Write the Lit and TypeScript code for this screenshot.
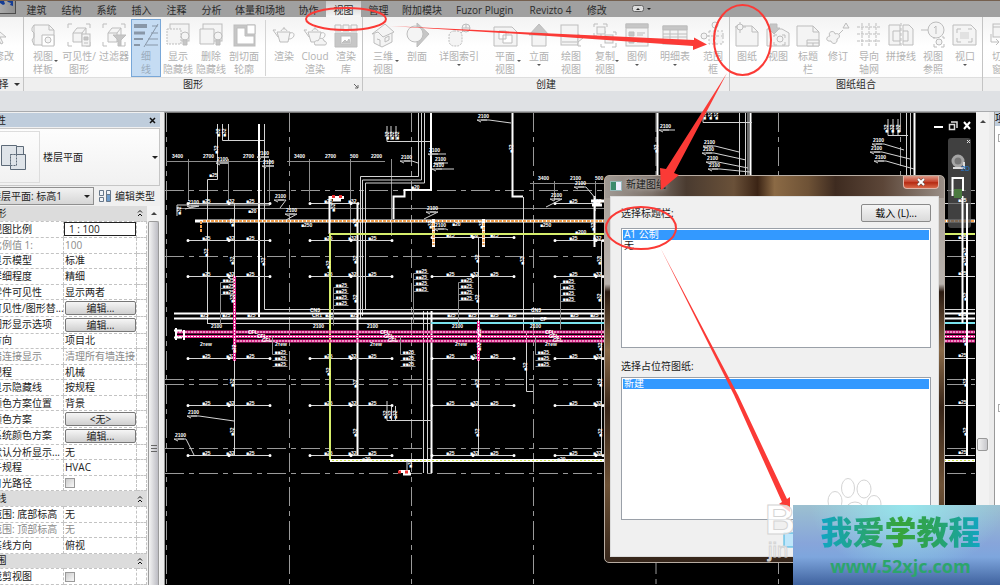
import { LitElement, html, svg, css, TemplateResult } from "lit";
import { customElement } from "lit/decorators.js";
import { classMap } from "lit/directives/class-map.js";

const FONT = css`"Open Sans", "Noto Sans CJK SC", sans-serif`;

/* ---------- ribbon glyphs, each on a 24 x 26 grid ---------- */
const corners = svg`<path d="M1 6V2h4M19 2h4v4M1 20v4h4M19 24h4v-4" fill="none"/>`;
const house = svg`<path d="M6 11l4-5h9v9l-4 5H6z"/><path d="M6 11h9v9M15 11l4-5" fill="none"/>`;
const sheet = svg`<path d="M1 4h16l6 6v14H1z"/><path d="M17 4v6h6" fill="none"/>`;
const bulb = svg`<circle cx="19" cy="14" r="4"/><path class="dk" d="M17 18h4v5h-4z"/>`;
const pot = svg`<path d="M5 10h13l-2 10H8zM9 9c1-3 5-3 6 0M11 6h2"/><path d="M6 15L1 8l3 0M18 11c6-2 5 6-1 6" fill="none"/>`;
const ICONS: Record<string, TemplateResult> = {
  cursor: svg`<path d="M2 5v15l4-4 3 6 2-1-3-6h6z"/>`,
  template: svg`<path d="M3 3h15l5 5v15H3z"/><path d="M3 3l-2 3v3l2 2v4l-2 3 2 5M18 3v5h5" fill="none"/><path class="wt" d="M11 13h12v11H11z"/><circle cx="17" cy="18" r="3"/>`,
  visibility: svg`${corners}${house}<rect x="15" y="12" width="8" height="12"/><path d="M17 15h4v3h-4zM17 21h4" class="dk"/>`,
  filter: svg`${corners}${house}<path d="M11 13h13l-5 5v6h-3v-6z" class="dk"/>`,
  thin: svg`<g stroke="#8897a8"><path d="M0 4h13" stroke-width="4"/><path d="M0 11h11" stroke-width="3"/><path d="M0 17h9M0 23h6" stroke-width="2"/><path d="M24 2L10 25M18 4h6M17 11h7M14 17h10M12 23h12"/></g>`,
  show: svg`<rect x="4" y="2" width="19" height="17"/><path d="M1 7h14v15H1z" stroke-dasharray="2 1"/>${bulb}`,
  remove: svg`<rect x="4" y="2" width="19" height="17"/><path d="M1 7h14v15H1z"/>${bulb}`,
  profile: svg`<rect x="2" y="3" width="21" height="21" class="dk"/><path d="M5 6h8v8h9v8H5z" class="wt"/><path d="M15 3h8v9h-8z" class="wt"/>`,
  render: pot,
  cloud: svg`${pot}<path d="M12 23c-2-4 2-5 3-4 1-4 6-3 6 0 3 0 3 4 1 4z"/>`,
  gallery: svg`<path d="M1 3h6v6H1zM9 3h6v6H9zM17 3h6v6h-6z"/><path d="M1 11h22v14H1z" class="dk"/><path d="M7 14h10v8H7z" class="wt"/><path d="M8 21l3-3 2 2 2-3 1 4z" class="dk"/>`,
  home: svg`<path d="M3 12v9l8 4 10-5v-9"/><path d="M1 12L14 2l9 8-11 5-5-5z"/><path d="M6 17l3 1v6M14 16l4-2v4l-4 2z" fill="none"/>`,
  section: svg`<path d="M12 1l12 11-12 13z" class="dk"/><circle cx="10" cy="12" r="8"/>`,
  callout: svg`<rect x="2" y="9" width="13" height="15" rx="5" stroke-dasharray="2 1"/><path d="M14 11l3-3" /><circle cx="19" cy="6" r="4"/><path d="M15 6h8M19 2v4"/>`,
  plan: svg`<path d="M1 5h18l5 5v14H1z"/><path d="M6 9h7v4h6v8h-9v-4H6z" class="wt"/><path d="M10 13h3v4h-3z"/>`,
  elevation: svg`<path d="M12 2L22 13H2z" class="dk"/><path d="M5 13h14v11H5z"/>`,
  drafting: svg`<rect x="2" y="3" width="17" height="20"/><path d="M3 20h15M19 12v8l5-4zM19 20v4h3" />`,
  duplicate: svg`<path d="M1 5V2h4M10 2h4v3M1 11v3h3M8 14v-3M8 22v3h4M19 25h4v-4M23 13v-3h-3M13 10h-2" fill="none"/><rect x="4" y="5" width="8" height="7"/><rect x="12" y="13" width="8" height="8"/>`,
  legend: svg`<rect x="1" y="2" width="22" height="22"/><path d="M1 2h22v4H1zM4 10h5v4H4zM4 17h5v4H4z" class="dk"/><path d="M12 11h8M12 13h6M12 18h8M12 20h6"/>`,
  schedule: svg`<rect x="0" y="4" width="24" height="18"/><path d="M0 4h24v4H0z" class="dk"/><path d="M0 12h24M0 15h24M0 19h24M7 8v14M15 8v14"/>`,
  scope: svg`<rect x="8" y="9" width="14" height="13" stroke-dasharray="2 2"/><path d="M5 14h19M14 5v19" stroke-dasharray="3 2"/><circle cx="3" cy="14" r="3"/><circle cx="14" cy="3" r="3"/>`,
  sheet: svg`${sheet}<path d="M5 0v11M0 5h11" /><circle cx="5" cy="5" r="3"/>`,
  place: svg`<path d="M1 7h15l7 4v13H1z"/><path d="M4 2h7v4h3l-6 6-6-6h2z" class="dk"/><path d="M8 15v-2h3M16 13h3v3M8 20v3h3M19 20v3h-3" fill="none"/><circle cx="14" cy="17" r="3"/>`,
  title: svg`${sheet}<path d="M11 18h12v6H11zM11 21h12M17 21v3"/>`,
  revision: svg`<path d="M20 1l3 5h-6zM17 8l-5 5" /><path d="M4 14c-3-5 5-6 5-2 5-2 6 4 2 5 1 5-5 6-6 2-6 1-5-5-1-5z"/>`,
  guide: svg`<path d="M5 1v24M12 1v24M19 1v24M0 5h24M0 12h24M0 19h24" stroke-dasharray="3 1"/>`,
  match: svg`<path d="M0 3h11v20H0zM14 3h6l4 4v16H14z"/><path d="M11 9H4v10h7M14 9h5v10h-5" fill="none"/><path d="M12 1v25" stroke-dasharray="3 2"/>`,
  ref: svg`<circle cx="15" cy="8" r="8"/><path d="M15 4v8M13 6l2-2M0 8h7" /><circle cx="18" cy="20" r="3"/><path d="M13 17v-2M23 17v-2h-2M13 22v3h3M23 22v3h-3" fill="none"/>`,
  viewport: svg`<path d="M0 3h18l5 5v15H0z"/><path d="M4 11V7h4M15 7h4M4 16v4h4M19 16v4h-4" fill="none"/><path d="M7 10h9v7H7z" class="dk2"/>`,
  windows: svg`<rect x="3" y="2" width="20" height="13"/><path d="M3 5h20M1 12v8h7M6 17l3 3-3 3" fill="none"/><rect x="12" y="11" width="12" height="12"/>`,
};

interface Tool { icon: string; lines: string[]; w: string; drop?: "side" | "below"; on?: boolean; rule?: boolean; }
interface Panel { name: string; tools: Tool[]; cls: string; launch?: boolean; menu?: boolean; }
const t = (icon: string, label: string, w: string, more: Partial<Tool> = {}): Tool => ({ icon, lines: label.split("|"), w, ...more });

const PANELS: Panel[] = [
  { name: "选择", cls: "first", menu: true, tools: [t("cursor", "修改", "w36")] },
  { name: "图形", cls: "", launch: true, tools: [
    t("template", "视图|样板", "w36", { drop: "side" }), t("visibility", "可见性/|图形", "w36"), t("filter", "过滤器", "w34"),
    t("thin", "细|线", "w30", { on: true }), t("show", "显示|隐藏线", "w34"), t("remove", "删除|隐藏线", "w32"),
    t("profile", "剖切面|轮廓", "w34"), t("render", "渲染", "w30", { rule: true }), t("cloud", "Cloud|渲染", "w32"), t("gallery", "渲染|库", "w30")] },
  { name: "创建", cls: "", tools: [
    t("home", "三维|视图", "w38", { drop: "side" }), t("section", "剖面", "w30"), t("callout", "详图索引", "w54", { drop: "below" }),
    t("plan", "平面|视图", "w38", { drop: "side" }), t("elevation", "立面", "w30", { drop: "below" }), t("drafting", "绘图|视图", "w34"),
    t("duplicate", "复制|视图", "w34", { drop: "side" }), t("legend", "图例", "w30", { drop: "below" }), t("schedule", "明细表", "w46", { drop: "below" }), t("scope", "范围|框", "w30")] },
  { name: "图纸组合", cls: "", tools: [
    t("sheet", "图纸", "w32"), t("place", "视图", "w30"), t("title", "标题|栏", "w30"), t("revision", "修订", "w30"),
    t("guide", "导向|轴网", "w32"), t("match", "拼接线", "w32"), t("ref", "视图|参照", "w32"), t("viewport", "视口", "w32", { drop: "below" })] },
  { name: "", cls: "last", tools: [t("windows", "切换|窗口", "w36")] },
];

@customElement("revit-ribbon")
class RevitRibbon extends LitElement {
  static styles = css`
    :host { display: block; font: 10px/14px ${FONT}; color: #2b2b2b; }
    button { font: inherit; color: inherit; border: 0; padding: 0; background: none; white-space: nowrap; }
    .tabs { display: flex; height: 17px; background: #a0a0a0; border-top: 1px solid #75604f; box-sizing: border-box; overflow: hidden; }
    .logo { width: 16px; height: 13px; flex: none; background: linear-gradient(90deg, #aaa, #8f8f8f); border: solid #4c4c4c; border-width: 0 1px 1px 0; box-sizing: border-box; margin-right: 3px; }
    .logo svg { display: block; }
    .tab { min-width: 35px; padding: 2px 6px 0; text-align: center; flex: none; line-height: 14px; }
    .tab.latin { padding: 2px 8px 0; }
    .tab.active { background: linear-gradient(#c9c9c9, #f6f6f6); }
    .cycle { margin-left: 18px; display: flex; align-items: center; }
    .body { display: flex; height: 74px; background: linear-gradient(#f3f3f3, #fff 40%, #fdfdfd); overflow: hidden; }
    .panel { display: flex; flex-direction: column; border-right: 1px solid #c4c4c4; box-sizing: border-box; flex: none; }
    .first { margin-left: -15px; }
    .last { flex: 1 0 36px; }
    .tools { display: flex; height: 60px; padding: 0 1px; }
    .tool { display: flex; flex-direction: column; align-items: center; box-sizing: border-box; position: relative; color: #b2b2b2; height: 58px; margin-top: 2px; padding-top: 2px; border: 1px solid transparent; flex: none; }
    .tool.on { background: #c5dcf3; border-color: #78a7d8; color: #9aabbc; }
    .rule { margin-left: 8px; }
    .rule::before { content: ""; position: absolute; left: -5px; top: 0; height: 56px; border-left: 1px solid #d4d4d4; }
    .tool svg.ic { width: 24px; height: 26px; flex: none; fill: #f4f4f4; stroke: #bdbdbd; stroke-width: 1; margin-bottom: 2px; overflow: visible; }
    .tool .dk { fill: #c6c6c6; } .tool .wt { fill: #fff; } .tool .dk2 { fill: #e2e2e2; stroke: none; }
    .tool span { display: block; line-height: 13px; }
    .caret { position: absolute; border: solid transparent; border-width: 2px 2px 0; border-top-color: #555; }
    .caret.side { right: 2px; top: 40px; } .caret.below { top: 44px; }
    .w30 { width: 30px; } .w32 { width: 32px; } .w34 { width: 34px; } .w36 { width: 36px; } .w38 { width: 38px; } .w46 { width: 46px; } .w54 { width: 54px; }
    .name { height: 14px; box-sizing: border-box; border-top: 1px solid #dedede; background: #efefef; text-align: center; line-height: 13px; position: relative; }
    .name i { display: inline-block; margin: 0 0 2px 5px; border: solid transparent; border-width: 3px 3px 0; border-top-color: #333; }
    .name svg { position: absolute; right: 3px; top: 5px; }
    .options { height: 20px; background: #dfe1e4; border-bottom: 1px solid #a9abae; }
  `;
  render() {
    const tabs = ["建筑", "结构", "系统", "插入", "注释", "分析", "体量和场地", "协作", "视图", "管理", "附加模块", "Fuzor Plugin", "Revizto 4", "修改"];
    return html`
      <nav class="tabs">
        <div class="logo"><svg width="15" height="12"><path d="M0 0h4l1 3-2 1-3-2zM7 0h6v5l-3-1 1-2-3-1z" fill="#143c94"/></svg></div>
        ${tabs.map((n) => html`<button class=${classMap({ tab: true, latin: /^[A-Z]/.test(n), active: n === "视图" })}>${n}</button>`)}
        <button class="cycle" aria-label="最小化功能区"><svg width="20" height="8"><rect x=".5" y=".5" width="11" height="6" rx="2" fill="#ddd" stroke="#666"/><path d="M4 5l2-2 2 2zM15 3h4l-2 2z" fill="#222"/></svg></button>
      </nav>
      <div class="body">
        ${PANELS.map((p) => html`<section class="panel ${p.cls}">
          <div class="tools">${p.tools.map((b) => html`<button class="tool ${b.w} ${b.on ? "on" : ""} ${b.rule ? "rule" : ""}">
            <svg class="ic" viewBox="0 0 24 26">${ICONS[b.icon]}</svg>
            ${b.lines.map((l) => html`<span>${l}</span>`)}
            ${b.drop ? html`<i class="caret ${b.drop}"></i>` : ""}</button>`)}</div>
          <div class="name">${p.name}${p.menu ? html`<i></i>` : ""}${p.launch ? html`<svg width="6" height="6"><path d="M1 1l4 4M5 2v3H2" stroke="#666" fill="none"/></svg>` : ""}</div>
        </section>`)}
      </div>
      <div class="options"></div>`;
  }
}

/* ---------- properties palette ---------- */
type Row = { label: string; value?: string; kind?: "head" | "edit" | "button" | "check" | "dim" };
const ROWS: Row[] = [
  { label: "图形", kind: "head" }, { label: "视图比例", value: "1 : 100", kind: "edit" }, { label: "比例值 1:", value: "100", kind: "dim" },
  { label: "显示模型", value: "标准" }, { label: "详细程度", value: "精细" }, { label: "零件可见性", value: "显示两者" },
  { label: "可见性/图形替...", value: "编辑...", kind: "button" }, { label: "图形显示选项", value: "编辑...", kind: "button" },
  { label: "方向", value: "项目北" }, { label: "墙连接显示", value: "清理所有墙连接", kind: "dim" }, { label: "规程", value: "机械" },
  { label: "显示隐藏线", value: "按规程" }, { label: "颜色方案位置", value: "背景" }, { label: "颜色方案", value: "<无>", kind: "button" },
  { label: "系统颜色方案", value: "编辑...", kind: "button" }, { label: "默认分析显示...", value: "无" }, { label: "子规程", value: "HVAC" },
  { label: "日光路径", kind: "check" }, { label: "基线", kind: "head" }, { label: "范围: 底部标高", value: "无" },
  { label: "范围: 顶部标高", value: "无", kind: "dim" }, { label: "基线方向", value: "俯视" }, { label: "范围", kind: "head" }, { label: "裁剪视图", kind: "check" },
];

@customElement("property-palette")
class PropertyPalette extends LitElement {
  static styles = css`
    :host { display: flex; flex-direction: column; overflow: hidden; min-height: 0; font: 10px/13px ${FONT}; color: #222; background: #f0f0f0; }
    .inner { margin-left: -20px; display: flex; flex-direction: column; flex: 1; min-height: 0; }
    button, select, input { font: inherit; color: inherit; }
    .title { display: flex; justify-content: space-between; align-items: center; background: #bfcddc; height: 14px; padding: 0 4px 0 6px; margin-top: 1px; }
    .title button { border: 0; background: none; padding: 0; display: flex; }
    .type { display: flex; align-items: center; height: 58px; border: 1px solid #c6c6c6; margin-top: 1px; padding-right: 1px; background: linear-gradient(#fdfdfd, #f1f1f1); box-sizing: border-box; }
    .thumb { width: 59px; height: 52px; border: 1px solid #ddd; box-sizing: border-box; display: flex; align-items: center; justify-content: flex-end; padding-right: 12px; }
    .type b { font-weight: 400; flex: 1; padding-left: 3px; }
    .down { border: solid transparent; border-width: 3px 3px 0; border-top-color: #222; }
    .inst { display: flex; align-items: center; height: 20px; }
    select { appearance: none; width: 114px; height: 18px; border: 1px solid #8f8f8f; border-radius: 0; background: linear-gradient(#f2f2f2, #d6d6d6); padding: 0 0 0 10px; margin-right: -10px; }
    .inst .down { margin-right: 8px; pointer-events: none; }
    .edit { display: flex; align-items: center; gap: 3px; border: 0; padding: 0; background: none; white-space: nowrap; }
    .grid { display: flex; flex: 1; min-height: 0; }
    table { width: 167px; height: 100%; border-collapse: collapse; table-layout: fixed; background: #fff; flex: none; }
    .c1 { width: 83px; } .c2 { width: 73px; }
    th, td { padding: 0; text-align: left; font-weight: 400; white-space: nowrap; overflow: hidden; border: 1px dashed #c3c3c3; line-height: 13px; }
    th { padding-left: 11px; } td { padding-left: 1px; }
    .head th { background: #dcdcdc; padding-left: 6px; border: 0; }
    .head td { background: #dcdcdc; border: 0; padding: 0; }
    .head svg { display: block; }
    .dim { color: #8b8b8b; }
    td input[type="text"] { display: block; width: 72px; height: 14px; box-sizing: border-box; border: 1px solid #222; padding: 0 4px; margin-left: -1px; background: #fff; }
    td button { display: block; width: 71px; height: 14px; border: 1px solid #777; border-radius: 2px; background: linear-gradient(#f6f6f6, #cfcfcf); padding: 0; line-height: 12px; text-align: center; }
    td input[type="checkbox"] { appearance: none; display: block; width: 10px; height: 10px; margin: 1px 0; border: 1px solid #999; background: linear-gradient(135deg, #ccc, #f8f8f8); }
    .bar { flex: 1; display: flex; flex-direction: column; align-items: center; background: #f3f3f3; padding: 0 1px; }
    .up { border: solid transparent; border-width: 0 3px 3px; border-bottom-color: #444; margin: 6px 0; }
    .knob { flex: 1; align-self: stretch; border: 1px solid #9b9b9b; border-bottom: 0; border-radius: 2px 2px 0 0; background: linear-gradient(90deg, #f4f4f4, #d2d2d6 60%, #bdbdc4); display: flex; align-items: center; justify-content: center; padding-top: 90px; }
  `;
  row(r: Row, i: number) {
    const id = "prop" + i;
    if (r.kind === "head") return html`<tr class="head"><th colspan="2">${r.label}</th><td><svg width="8" height="8"><path d="M1 3.500l2-2 2 2M1 7l2-2 2 2" fill="none" stroke="#111"/></svg></td></tr>`;
    const cell = r.kind === "edit" ? html`<input id=${id} type="text" .value=${r.value ?? ""}>`
      : r.kind === "button" ? html`<button id=${id}>${r.value}</button>`
      : r.kind === "check" ? html`<input id=${id} type="checkbox">` : r.value;
    return html`<tr class=${r.kind === "dim" ? "dim" : ""}><th><label for=${id}>${r.label}</label></th><td>${cell}</td><td></td></tr>`;
  }
  render() {
    return html`<div class="inner">
      <div class="title"><span>属性</span><button aria-label="关闭"><svg width="7" height="7"><path d="M1 1l5 5M6 1L1 6" stroke="#111" stroke-width="1.500"/></svg></button></div>
      <div class="type"><div class="thumb"><svg width="28" height="28"><g fill="#dfe4e9" stroke="#5d6a78"><path d="M2.500 2.500h15v20h-15z"/><path d="M17.500 3.500h7v8h-7z"/><path d="M11.500 11.500h15v15h-15z"/><path d="M11.500 11.500h6v11h-6z" stroke-dasharray="2 1"/></g></svg></div><b>楼层平面</b><i class="down"></i></div>
      <div class="inst"><select aria-label="实例"><option>楼层平面: 标高1</option></select><i class="down"></i>
        <button class="edit"><svg width="14" height="14"><g fill="#eef3f8" stroke="#66778a"><path d="M1.500 1.500h4v5h-4zM8.500 1.500h4v5h-4zM1.500 8.500h4v4h-4z"/><path d="M8.500 5.500h4v7h-4z" fill="#6d9ccc"/></g></svg>编辑类型</button></div>
      <div class="grid">
        <table><colgroup><col class="c1"><col class="c2"><col></colgroup><tbody>${ROWS.map((r, i) => this.row(r, i))}</tbody></table>
        <div class="bar"><i class="up"></i><div class="knob"><svg width="6" height="7"><path d="M0 .5h6M0 3.500h6M0 6.500h6" stroke="#666"/></svg></div></div>
      </div></div>`;
  }
}

/* ---------- floor plan ---------- */
const ln = (d: string, c = "w") => svg`<path class=${c} d=${d}/>`;
const tag = (x: number, y: number, s = "■25") => svg`<text x=${x} y=${y}>${s}</text>`;
const vtag = (x: number, y: number, s = "■32") => svg`<text transform="translate(${x} ${y}) rotate(-90)">${s}</text>`;
const branch = (x: number, y: number, w = 82) => svg`
  <path class="w" d="M${x} ${y}h${w}"/><path class="dot" d="M${x} ${y}h0M${x + 41} ${y}h0M${x + w} ${y}h0"/>
  ${tag(x + 14, y - 1)}${tag(x + 38, y - 1, "■32")}${w > 60 ? tag(x + 58, y - 1) : ""}`;
const ladder = (x: number, y: number, n: number, tail: number) => svg`
  <path class="g" d="M${x} ${y}v${tail}"/>
  ${Array.from({ length: n }, (_, i) => svg`<path class="g" d="M${x} ${y + i * 6}h15"/>${tag(x + 2, y + i * 6 - 1, "■■25")}`)}`;
const leader = (x: number, y: number, dx: number, dy: number) => svg`<path class="w" d="M${x + 10} ${y}h-10l4 2M${x + 4} ${y}h8L${x + dx} ${y + dy}"/>${tag(x + 1, y - 2, "2100")}`;

@customElement("plan-view")
class PlanView extends LitElement {
  static styles = css`
    :host { display: block; overflow: hidden; background: #000; }
    svg { display: block; width: 100%; height: 100%; }
    path { fill: none; stroke: #dcdcdc; }
    text { font: bold 5px "Liberation Sans", sans-serif; fill: #fff; }
    .w { stroke: #d4d4d4; } .g { stroke: #8e8e8e; } .b { stroke: #fff; stroke-width: 2; }
    .dash { stroke: #9a9a9a; stroke-dasharray: 19 5 5 5; }
    .dot { stroke: #fff; stroke-width: 3; stroke-linecap: round; }
    .y { stroke: #d6ee6c; stroke-width: 2; } .yd { stroke: #c9e04a; stroke-dasharray: 2 2; }
    .ob { stroke: #fff; stroke-width: 3; } .o { stroke: #f2a04c; stroke-width: 2; stroke-dasharray: 3 1; }
    .pk { stroke: #e0218a; stroke-width: 3; } .pw { stroke: #fff; stroke-dasharray: 2 1; }
    .cy { stroke: #79e3ee; stroke-width: 2; } .red { stroke: #e33; stroke-width: 3; stroke-dasharray: 3 4; }
    .bar { fill: #555; fill-opacity: .75; }
    .blue { fill: #2d6aa8; font-size: 7px; }
  `;
  render() {
    const xs = [188, 310, 432, 555];
    return html`<svg role="img" aria-label="楼层平面图"><g transform="translate(-165 -112)">
      ${[166.5, 289.5, 411.5, 533.5, 656, 778.5, 900.5].map((x) => ln(`M${x} 112V600`, "dash"))}
      ${[189.5, 255.5, 378.5, 383.5, 447.5, 472.500].map((y) => ln(`M165 ${y}H975`, "dash"))}
      ${ln("M166 160.500H273M287 160.500H385M530 182.500H605M177 207.500H605M188.500 158V200M228.500 158V200M269.500 158V200M309.500 158V200M350.500 158V237M391.500 158V235M554.500 180V200M595.500 180V210", "g")}
      ${[[172, "3400"], [203, "2700"], [243, "2700"], [294, "3400"], [325, "2700"], [350, "500"], [371, "2200"]].map(([x, s]) => tag(x as number, 157, s as string))}
      ${tag(538, 179, "3400")}${tag(570, 179, "2100")}${tag(595, 179, "500")}
      ${ln("M217.500 123V178.500H207.500V322M222.500 123V139.500H264M228.500 123V139M387 125V140.500H432M391 125V139M396 125V139M264.500 123V308.500H605M207 322.500H430M177 215V204H270")}
      ${ln("M259 123V316", "b")}${ln("M234.500 202V454M478.500 237V454M523.500 196V330M526.500 330V390.500H533M423.500 310V472M427.500 310V472M601.500 240V454")}
      ${ln("M357.500 202V454M393.500 218V195.500H404.500V189H431V112M431.500 310V472M512.500 112V195.500H523", "b")}
      ${ln("M360.500 318V175.500H418.500V112M362.500 315V179H421.500V112M365.500 308V182H424.500V112", "w")}
      ${xs.map((x, i) => [275.5, 357.5, 404.5, 454.5].map((y) => branch(x, y, i === 3 ? 48 : 82)))}
      ${branch(188, 239.5)}${branch(310, 239.5)}${branch(432, 236.5)}${branch(555, 239.5, 48)}${branch(188, 202.5)}${branch(310, 202.5, 48)}${branch(555, 202.5, 44)}
      ${ln("M195 220H975", "ob")}${ln("M203 220H975", "o")}${ln("M201 220V231", "o")}
      ${[433.5, 483.5].map((x) => [ln(`M${x} 218V246`, "ob"), ln(`M${x} 222V244`, "o")])}${ln("M594.500 195V246", "b")}
      ${ln("M329.500 195V233", "b")}${ln("M975 233H330V459", "y")}${ln("M330 459.500H975", "ob")}${ln("M332 459.500H975", "yd")}
      ${ln("M174 312.500H975M174 317.500H975", "b")}${ln("M431 322H975", "cy")}
      ${[331, 335.5, 340].map((y, i) => [ln(`M${i === 2 ? 234 : 176} ${y}H975`, "pk"), ln(`M${i === 2 ? 234 : 176} ${y}H975`, "pw")])}
      ${ln("M174 329.500h8M174 336.500h8M176 327v12M184 329v10", "b")}
      ${ln("M234.500 275V360M478.500 320V360", "pk")}${ln("M234.500 275V360M478.500 320V360", "pw")}
      ${[200, 222, 247, 325, 350, 447, 468, 490, 508, 570, 590].map((x) => tag(x, 316))}
      ${[248, 257, 262, 380, 384, 388, 545, 549, 553].map((x, i) => tag(x, 333 + (i % 3) * 4, "CFL"))}
      ${[200, 275, 370, 455, 545].map((x) => tag(x, 345, "2ᴛew"))}${[211, 313, 367, 452, 530].map((x) => tag(x, 327, "2100"))}
      ${tag(310, 311, "CN3")}${tag(312, 316, "CR1")}${tag(531, 311, "CN3")}${tag(540, 320, "CF")}
      ${[[219, 136], [225, 136], [217, 153], [207, 256], [264, 265], [233, 226], [233, 264], [233, 302], [329, 268], [334, 211], [356, 226], [356, 263], [356, 302], [388, 139], [393, 139], [398, 139], [512, 152], [523, 264], [478, 262], [478, 302], [431, 228], [482, 228], [594, 230], [600, 264], [600, 301], [235, 352], [233, 386], [233, 435], [329, 375], [356, 387], [356, 436], [478, 387], [478, 436], [526, 370], [480, 350], [480, 336], [601, 350], [601, 386], [601, 436], [180, 214], [386, 418], [391, 418], [396, 418], [411, 467]].map(([x, y]) => vtag(x + 1, y))}
      ${tag(209, 176, "■25")}${tag(248, 212, "■20")}${tag(301, 226, "■250")}${tag(362, 460, "■20")}${tag(557, 460, "■20")}${tag(452, 225, "■20")}${tag(540, 226, "■250")}${tag(575, 233, "■200")}${tag(411, 188, "■20")}
      ${ladder(220.5, 281.5, 3, 42)}${ladder(333.5, 286.5, 4, 38)}${ladder(413.5, 272.500, 4, 50)}${ladder(458.5, 281.5, 4, 42)}${ladder(560.5, 282.5, 4, 46)}
      ${ladder(272.5, 353.5, 3, -18)}${ladder(400.5, 353.5, 3, -18)}${ladder(535.5, 353.5, 3, -18)}
      ${leader(187, 205, -2, 3)}${leader(274, 199, 6, 8)}${leader(285, 213, 1, 6)}${leader(187, 415, 47, 5)}${leader(174, 438, 20, 16)}${leader(477, 119, 34, 3)}
      ${leader(428, 153, 18, 0)}${leader(434, 162, 14, 0)}${leader(432, 168, 22, 0)}${leader(400, 160, 18, 2)}${leader(426, 211, -2, 7)}${leader(434, 228, 14, 1)}${leader(574, 186, 22, 12)}${leader(550, 198, -4, 8)}${leader(216, 162, 10, 0)}${leader(257, 156, 10, 0)}${leader(262, 165, 10, 0)}
      ${ln("M387 400V419.500H432M391.500 405V419M395.500 405V419M407 460V472", "w")}
      ${ln("M330 196.500h14M333 199h8M399 470.500h11M403 473h8M591 200h14M592 204h10", "ob")}${ln("M332 195.500h12M398 471h12", "red")}
      ${ln("M657.500 112V180M750.500 112V180M914.500 112V180", "b")}${ln("M739.500 112V180M745.500 112V180M748 112V180M906.500 112V180M910.500 112V180M703 112V121.500H752M888 118V134.500H908M893 118V134M898 118V134")}
      ${leader(659, 129, 16, 0)}${leader(703, 145, 36, 6)}${leader(702, 152, 44, 7)}${leader(706, 161, 42, 6)}${leader(708, 168, 42, 3)}
      ${leader(872, 143, 32, 6)}${leader(870, 151, 40, 7)}${leader(874, 160, 40, 8)}${[706, 712, 718, 888, 894, 900].map((x, i) => vtag(x, i > 2 ? 132 : 119))}${vtag(658, 152)}
      ${ln("M945 202.500H975M945 239.500H975M945 275.500H975M945 308.500H975M945 357.500H975M945 404.500H975M945 454.500H975")}
      <rect class="bar" x="948" y="137" width="23" height="90" rx="3"/>
      ${ln("M952.500 195V177H963V190M962.500 195V322M967 202V455", "b")}
      ${[202, 239, 275, 316, 357, 404, 454].map((y) => tag(958, y - 1))}${[255, 265, 300, 345, 386, 435].map((y) => vtag(967, y))}
      <rect x="954" y="188" width="8" height="9" fill="#4b7a3f"/>
      <path d="M967 139l3 3M970 139l-3 3"/><circle cx="958" cy="160" r="5" fill="#777" stroke="#a5a5a5" stroke-width="3"/><path d="M953 167h11v-6" stroke="#a5a5a5" stroke-width="2"/><text class="blue" x="961" y="170">2D</text>
      <path class="b" d="M934 126h9M964 121l6 7M970 121l-6 7"/><path d="M949.500 123.500h5v5h-5zM951 121h6v6" stroke="#fff" stroke-width="1.500"/>
    </g></svg>`;
  }
}

/* ---------- new sheet dialog ---------- */
@customElement("sheet-dialog")
class SheetDialog extends LitElement {
  static styles = css`
    :host { display: flex; flex-direction: column; box-sizing: border-box; padding: 0 5px 5px; border: 1px solid #b7aca2; border-radius: 5px; font: 10px/13px ${FONT}; color: #1c1c1c;
      background: linear-gradient(90deg, #a19a94, #7d726a 14%, #4a3b30 24%, #6a5139 38%, #3b2415 45%, #8b6a45 50%, #6e5236 60%, #3e2b20 68%, #5c4638 82%, #998e86) 0 0 / 100% 22px no-repeat, linear-gradient(#a69d95, #b9b3ae 28%, #2a1a10 30%, #8a6a48 45%, #372417 60%, #6e5236 80%, #35251a); }
    .bar { display: flex; align-items: center; height: 20px; flex: none; gap: 4px; }
    .bar h2 { margin: 0; font: inherit; text-shadow: 0 0 5px #ddd; flex: 1; line-height: 16px; padding-bottom: 4px; }
    .close { align-self: flex-start; width: 36px; height: 13px; border: 1px solid #e0b5a8; border-top: 0; border-radius: 0 0 4px 4px; background: linear-gradient(#dc9a88, #c6402a 50%, #b52a12 55%, #d8694a); padding: 0; display: flex; align-items: center; justify-content: center; box-sizing: border-box; }
    .body { flex: 1; min-height: 0; background: #f0f0f0; border: 1px solid #ddd; padding: 7px 7px 10px 10px; display: flex; flex-direction: column; box-sizing: border-box; }
    .line { display: flex; justify-content: space-between; align-items: center; height: 18px; margin-bottom: 6px; }
    .load { width: 70px; height: 18px; border: 1px solid #8a8a8a; border-radius: 2px; background: linear-gradient(#f5f5f5, #dadada); font: inherit; padding: 0; }
    select { appearance: none; display: block; width: 100%; border: 1px solid #9aa0a8; border-radius: 0; background: #fff; padding: 0 1px; font: inherit; color: inherit; overflow: hidden; outline: 0; box-sizing: border-box; }
    option { padding: 0 1px; height: 14px; min-height: 14px; margin: -3px 0 -1px; font-size: 10px; }
    option.hot { background: linear-gradient(#39f, #39f) 0 4px / 100% 10px no-repeat; color: #fff; }
    .a { height: 120px; } .b { height: 143px; }
    .mid { height: 16px; line-height: 16px; margin: 10px 0 3px; }
  `;
  render() {
    return html`<div class="bar"><svg width="12" height="10"><rect x=".5" y=".5" width="11" height="9" fill="#eef" stroke="#9bb"/><path d="M1 1h5v8H1z" fill="#3b8a6e"/></svg><h2>新建图纸</h2>
        <button class="close" aria-label="关闭"><svg width="10" height="8"><path d="M2 1l6 6M8 1L2 7" stroke="#555" stroke-width="3"/><path d="M2 1l6 6M8 1L2 7" stroke="#fff" stroke-width="2"/></svg></button></div>
      <div class="body">
        <div class="line"><label for="titles">选择标题栏:</label><button class="load">载入 (L)...</button></div>
        <select id="titles" class="a" size="8"><option class="hot">A1 公制</option><option>无</option></select>
        <label class="mid" for="holders">选择占位符图纸:</label>
        <select id="holders" class="b" size="8"><option class="hot">新建</option></select>
      </div>`;
  }
}

@customElement("app-root")
class AppRoot extends LitElement {
  static styles = css`
    :host { display: flex; flex-direction: column; height: 100vh; position: relative; overflow: hidden; background: #ececec; font: 10px/13px ${FONT}; }
    .main { flex: 1; min-height: 0; display: grid; grid-template-columns: 160px minmax(0, 1fr) 13px 6px; grid-template-rows: minmax(0, 1fr); column-gap: 5px; }
    .stage { position: relative; display: grid; margin-right: -5px; border-top: 1px solid #777; box-shadow: -1px 0 #999; }
    sheet-dialog { position: absolute; left: 439px; top: 62px; width: 341px; height: 388px; }
    .vbar { background: #f2f2f2; display: flex; flex-direction: column; align-items: center; }
    .up { border: solid transparent; border-width: 0 3px 3px; border-bottom-color: #444; margin: 8px 0 315px; }
    .knob { width: 11px; height: 13px; box-sizing: border-box; border: 1px solid #999; border-radius: 2px; background: linear-gradient(90deg, #f2f2f2, #c8c8cc); }
    .tree { background: #fff; border-left: 1px solid #999; overflow: hidden; white-space: nowrap; }
    .tree b { display: block; height: 14px; background: #bfcddc; font-weight: 400; margin-bottom: 8px; }
    .tree i { display: block; width: 6px; height: 6px; border: 1px solid #aaa; margin: 0 0 262px 3px; }
    .marks { position: absolute; inset: 0; pointer-events: none; }
    .marks .ring { fill: none; stroke: #fb3a36; stroke-width: 2; } .marks .arrow { fill: #fb3a36; }
    .marks text { fill: #fff; fill-opacity: .75; stroke: #d4d4d4; stroke-width: 1; }
    .big { font: bold 42px "Liberation Sans", sans-serif; } .small { font: 20px "Liberation Sans", sans-serif; }
    .paw { fill: #fff; fill-opacity: .5; stroke: #d4d4d4; stroke-width: 1; }
    .brand { position: absolute; right: 0; bottom: 0; width: 207px; height: 80px; display: flex; flex-direction: column; align-items: center; box-sizing: border-box; padding: 3px 0 0 8px;
      background: radial-gradient(ellipse at 55% 0, rgba(150, 232, 238, .95), rgba(150, 225, 240, 0) 60%), linear-gradient(#9cc0d0, #87a5da 48%, #7ea6dd 65%, #3f629e); }
    .brand strong { font: 900 32px/44px "Noto Sans CJK SC", sans-serif; color: transparent; background: linear-gradient(90deg, #10a5c4, #37a43a 50%, #2ba35c 70%, #10a5c4); background-clip: text; -webkit-background-clip: text; }
    .brand a { font: bold 18px/28px "Open Sans", sans-serif; color: #2ca56c; text-decoration: none; }
  `;
  render() {
    return html`<revit-ribbon></revit-ribbon>
      <div class="main">
        <property-palette></property-palette>
        <div class="stage"><plan-view></plan-view><sheet-dialog></sheet-dialog></div>
        <div class="vbar"><i class="up"></i><div class="knob"></div></div>
        <div class="tree"><b>项目浏览器</b><i></i><i></i></div>
      </div>
      <svg class="marks" width="1000" height="585">
        <ellipse class="ring" cx="346" cy="19" rx="40" ry="11"/><ellipse class="ring" cx="742.500" cy="40" rx="28.500" ry="35"/><ellipse class="ring" cx="641" cy="228" rx="35" ry="21"/>
        <path class="arrow" d="M390 26L694 40V37.500L707 44.500L693 50V46L520 34ZM727 73L674 173L679 175L661 190L660 168L666 169ZM661 249L738 395L787 499L790 497L790 512L779 504L782 502L734 395Z"/>
        <g class="paw"><ellipse cx="848" cy="488" rx="6.500" ry="9.500"/><ellipse cx="864" cy="489" rx="7" ry="9"/><ellipse cx="835" cy="501" rx="7" ry="9.500"/><ellipse cx="874" cy="504" rx="7" ry="8.500"/><ellipse cx="855" cy="512" rx="10" ry="10"/></g>
        <rect x="784" y="533" width="20" height="14" fill="#bfe6fa" stroke="#3cb0dd"/>
        <text class="big" x="765" y="534">B</text><text class="small" x="768" y="557">jin</text>
      </svg>
      <aside class="brand"><strong>我爱学教程</strong><a href="#">www.52xjc.com</a></aside>`;
  }
}
